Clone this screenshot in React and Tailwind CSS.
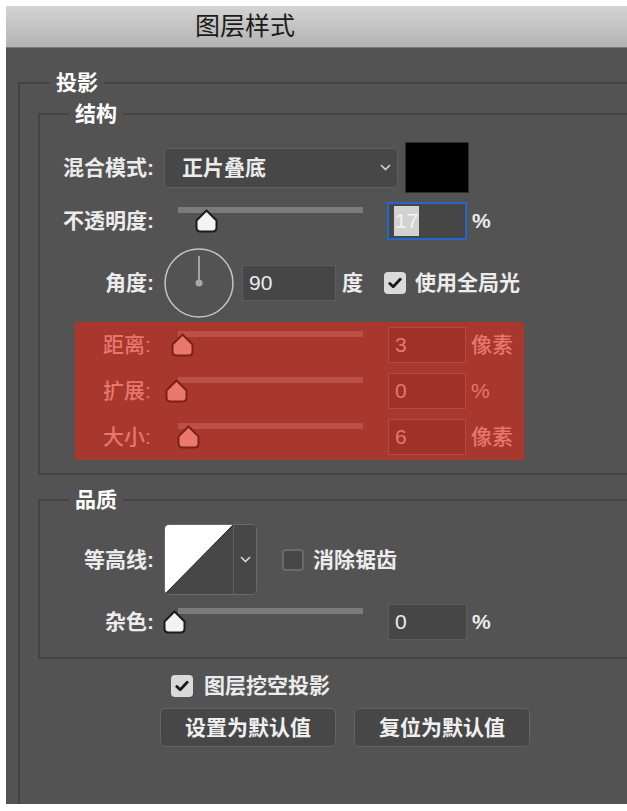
import React from 'react';

const Thumb = ({ red, className }) => (
  <svg width="25" height="24" viewBox="0 0 25 24" className={className}>
    <path
      d="M12.5 1.5 L22.5 11.5 V18.5 Q22.5 22.5 18.5 22.5 H6.5 Q2.5 22.5 2.5 18.5 V11.5 Z"
      fill={red ? '#ea786d' : '#f3f3f3'}
      stroke={red ? '#7d2018' : '#1c1c1c'}
      strokeWidth="2"
      strokeLinejoin="round"
    />
  </svg>
);

const Slider = ({ red, thumb }) => (
  <div className="relative h-full w-[185px] shrink-0">
    <div className={`absolute left-0 right-0 top-[calc(50%-14px)] h-[6px] ${red ? 'bg-[#bb5046]' : 'bg-[#7b7b7b]'}`} />
    <Thumb red={red} className={`absolute top-1/2 -translate-y-1/2 ${thumb}`} />
  </div>
);

const Chevron = () => (
  <svg width="11" height="7" viewBox="0 0 11 7">
    <path d="M1 1 L5.5 5.5 L10 1" fill="none" stroke="#d4d4d4" strokeWidth="1.6" />
  </svg>
);

const Check = ({ checked }) =>
  checked ? (
    <span className="flex h-[22px] w-[22px] shrink-0 items-center justify-center rounded-[4px] bg-[#dadada]">
      <svg width="14" height="12" viewBox="0 0 14 12">
        <path d="M1.8 6.4 L5.2 9.8 L12.2 2.2" fill="none" stroke="#1a1a1a" strokeWidth="2.8" strokeLinecap="round" strokeLinejoin="round" />
      </svg>
    </span>
  ) : (
    <span className="block h-[22px] w-[22px] shrink-0 rounded-[4px] border-2 border-[#6a6a6a] bg-[#474747]" />
  );

const RedRow = ({ label, value, unit, thumb }) => (
  <div className="flex h-[46px] items-center">
    <span className="w-[75px] shrink-0">{label}</span>
    <Slider red thumb={thumb} />
    <div className="ml-[25px] flex h-[36px] w-[78px] items-center border border-[#b44a40] bg-[#a03128] pl-[6px] font-normal">{value}</div>
    <span className="ml-[5px]">{unit}</span>
  </div>
);

export default function App() {
  return (
    <div className="flex h-[811px] w-[627px] flex-col bg-white pb-[7px] pl-[6px] pt-[6px] font-[family-name:'Liberation_Sans','Noto_Sans_CJK_SC',sans-serif] text-[21px] font-semibold text-[#ececec]">
      {/* title bar */}
      <div className="flex h-[42px] shrink-0 items-center border-b border-[#7a7a7a] bg-gradient-to-b from-[#d4d4d4] to-[#b3b3b3] pl-[189px] text-[25px] font-normal text-[#1c1c1c]">
        图层样式
      </div>

      <div className="flex flex-1 flex-col overflow-hidden bg-[#535353]">
        <fieldset className="ml-[12px] mt-[21px] w-[680px] flex-1 border-l-2 border-t-2 border-[#434343]">
          <legend className="ml-[30px] px-[6px] font-bold leading-[28px] text-white">投影</legend>

          {/* 结构 */}
          <fieldset className="ml-[18px] mt-[3px] border-2 border-r-0 border-[#434343] pb-[13px]">
            <legend className="ml-[29px] px-[6px] font-bold leading-[28px] text-white">结构</legend>

            <div className="mt-[14px] flex h-[51px] items-center">
              <span className="w-[114px] shrink-0 text-right">混合模式:</span>
              <div className="ml-[10px] flex h-[40px] w-[234px] items-center justify-between rounded-[5px] border border-[#5f5f5f] bg-[#474747] pl-[17px] pr-[6px]">
                <span>正片叠底</span>
                <Chevron />
              </div>
              <div className="ml-[7px] h-[51px] w-[64px] border border-[#2e2e2e] bg-black" />
            </div>

            <div className="mt-[9px] flex h-[38px] items-center">
              <span className="w-[114px] shrink-0 text-right">不透明度:</span>
              <div className="ml-[24px] h-full">
                <Slider thumb="left-[16px]" />
              </div>
              <div className="ml-[24px] flex h-[38px] w-[80px] items-center border-2 border-[#2566c8] bg-[#464646] pl-[5px] font-normal">
                <span className="flex h-[30px] items-center bg-[#d2d2d2] px-[1px] text-[#f2f2f2]">17</span>
              </div>
              <span className="ml-[5px]">%</span>
            </div>

            <div className="mt-[8px] flex h-[70px] items-center">
              <span className="w-[114px] shrink-0 text-right">角度:</span>
              <svg width="70" height="70" viewBox="0 0 70 70" className="ml-[10px] shrink-0">
                <circle cx="35" cy="35" r="34" fill="none" stroke="#c4c4c4" strokeWidth="1.5" />
                <line x1="35" y1="8" x2="35" y2="35" stroke="#bdbdbd" strokeWidth="1.5" />
                <circle cx="35" cy="35" r="3.5" fill="#a8a8a8" />
              </svg>
              <div className="ml-[8px] flex h-[36px] w-[94px] items-center border border-[#5c5c5c] bg-[#464646] pl-[6px] font-normal">90</div>
              <span className="ml-[6px]">度</span>
              <span className="ml-[21px] flex">
                <Check checked />
              </span>
              <span className="ml-[9px]">使用全局光</span>
            </div>

            <div className="ml-[35px] mt-[4px] flex w-[449px] flex-col bg-[#a8382e] pl-[28px] font-medium text-[#e5776c]">
              <RedRow label="距离:" value="3" unit="像素" thumb="left-[-8px]" />
              <RedRow label="扩展:" value="0" unit="%" thumb="left-[-14px]" />
              <RedRow label="大小:" value="6" unit="像素" thumb="left-[-2px]" />
            </div>
          </fieldset>

          {/* 品质 */}
          <fieldset className="ml-[18px] mt-[11px] border-2 border-r-0 border-[#434343] pb-[17px]">
            <legend className="ml-[29px] px-[6px] font-bold leading-[28px] text-white">品质</legend>

            <div className="mt-[10px] flex h-[71px] items-center">
              <span className="w-[114px] shrink-0 text-right">等高线:</span>
              <div className="ml-[10px] flex h-[71px] w-[93px] overflow-hidden rounded-[5px] border border-[#6a6a6a]">
                <svg width="68" height="69" viewBox="0 0 68 69" className="shrink-0">
                  <rect width="68" height="69" fill="#474747" />
                  <polygon points="0,0 68,0 0,69" fill="#ffffff" />
                  <line x1="0" y1="69" x2="68" y2="0" stroke="#222" strokeWidth="1" />
                </svg>
                <div className="flex flex-1 items-center justify-center border-l border-[#5f5f5f] bg-[#474747]">
                  <Chevron />
                </div>
              </div>
              <span className="ml-[25px] flex">
                <Check />
              </span>
              <span className="ml-[9px]">消除锯齿</span>
            </div>

            <div className="mt-[9px] flex h-[36px] items-center">
              <span className="w-[114px] shrink-0 text-right">杂色:</span>
              <div className="ml-[24px] h-full">
                <Slider thumb="left-[-16px]" />
              </div>
              <div className="ml-[25px] flex h-[36px] w-[79px] items-center border border-[#5c5c5c] bg-[#464646] pl-[6px] font-normal">0</div>
              <span className="ml-[5px]">%</span>
            </div>
          </fieldset>

          <div className="mt-[16px] flex h-[22px] items-center pl-[151px]">
            <Check checked />
            <span className="ml-[11px]">图层挖空投影</span>
          </div>

          <div className="mt-[11px] flex gap-[18px] pl-[140px]">
            <button className="h-[39px] w-[176px] rounded-[5px] border border-[#636363] bg-[#474747] text-[#f0f0f0]">设置为默认值</button>
            <button className="h-[39px] w-[176px] rounded-[5px] border border-[#636363] bg-[#474747] text-[#f0f0f0]">复位为默认值</button>
          </div>
        </fieldset>
      </div>
    </div>
  );
}
